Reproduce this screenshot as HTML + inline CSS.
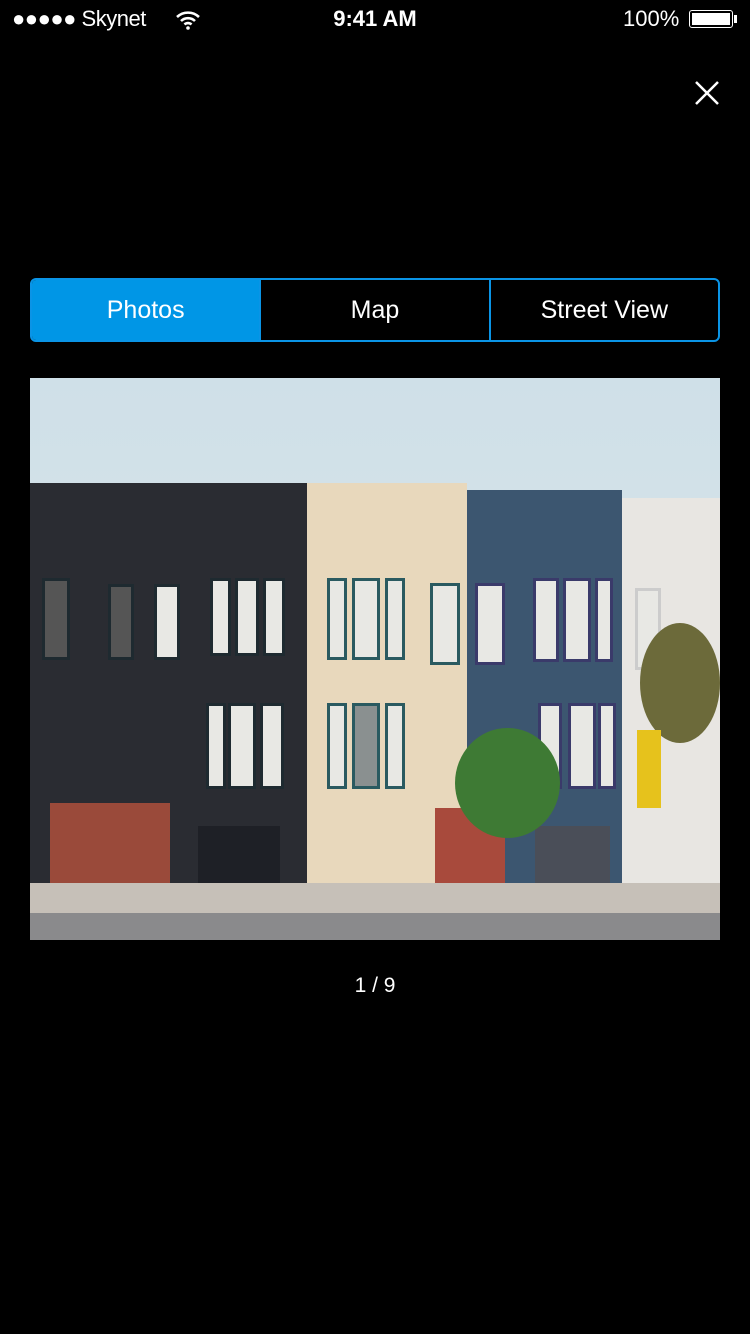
<!DOCTYPE html>
<html><head><style>
body{margin:0;width:750px;height:1334px;background:#000;overflow:hidden;font-family:"Liberation Sans",sans-serif;color:#fff;position:relative}
.a{position:absolute}
.w{position:absolute;background:#e8e8e4;border:3px solid #1e2a30}
</style></head><body>
<div class="a" style="left:12px;top:6px;font-size:22px;letter-spacing:-0.5px">●●●●● Skynet</div>
<svg class="a" style="left:175px;top:10px" width="26" height="20" viewBox="0 0 26 20"><path d="M2 7a16 16 0 0 1 22 0M6 11a10 10 0 0 1 14 0M9.5 14.5a5 5 0 0 1 7 0" stroke="#fff" stroke-width="2.6" fill="none"/><circle cx="13" cy="18" r="1.8" fill="#fff"/></svg>
<div class="a" style="left:0;width:750px;top:6px;text-align:center;font-size:22px;font-weight:bold">9:41 AM</div>
<div class="a" style="left:623px;top:6px;font-size:22px">100%</div>
<div class="a" style="left:689px;top:10px;width:44px;height:18px;border:1.5px solid #fff;border-radius:3px;box-sizing:border-box;padding:2px"><div style="background:#fff;width:100%;height:100%"></div></div>
<div class="a" style="left:734px;top:15px;width:3px;height:8px;background:#fff"></div>
<svg class="a" style="left:694px;top:80px" width="26" height="26"><path d="M2 2L24 24M24 2L2 24" stroke="#fff" stroke-width="2.5"/></svg>
<div class="a" style="left:30px;top:278px;width:690px;height:64px;border:2px solid #0a94e6;border-radius:6px;box-sizing:border-box;display:flex;overflow:hidden;font-size:25px">
<div style="flex:1;background:#0096e6;display:flex;align-items:center;justify-content:center">Photos</div>
<div style="flex:1;display:flex;align-items:center;justify-content:center;border-left:2px solid #0a94e6">Map</div>
<div style="flex:1;display:flex;align-items:center;justify-content:center;border-left:2px solid #0a94e6">Street View</div>
</div>
<div class="a" style="left:30px;top:378px;width:690px;height:562px;overflow:hidden;background:linear-gradient(#cfe0e8,#dde6ea)">
<div class="a" style="left:0;top:105px;width:277px;height:405px;background:#2a2c32"></div>
<div class="a" style="left:277px;top:105px;width:160px;height:405px;background:#e8d8bc"></div>
<div class="a" style="left:437px;top:112px;width:155px;height:398px;background:#3c5670"></div>
<div class="a" style="left:592px;top:120px;width:98px;height:390px;background:#e8e6e2"></div>
<div class="w" style="left:180px;top:200px;width:15px;height:72px"></div>
<div class="w" style="left:205px;top:200px;width:18px;height:72px"></div>
<div class="w" style="left:233px;top:200px;width:16px;height:72px"></div>
<div class="w" style="left:124px;top:206px;width:20px;height:70px"></div>
<div class="w" style="left:78px;top:206px;width:20px;height:70px;background:#555"></div>
<div class="w" style="left:12px;top:200px;width:22px;height:76px;background:#555"></div>
<div class="w" style="left:176px;top:325px;width:14px;height:80px"></div>
<div class="w" style="left:198px;top:325px;width:22px;height:80px"></div>
<div class="w" style="left:230px;top:325px;width:18px;height:80px"></div>
<div class="w" style="left:297px;top:200px;width:14px;height:76px;border-color:#2a5a60"></div>
<div class="w" style="left:322px;top:200px;width:22px;height:76px;border-color:#2a5a60"></div>
<div class="w" style="left:355px;top:200px;width:14px;height:76px;border-color:#2a5a60"></div>
<div class="w" style="left:400px;top:205px;width:24px;height:76px;border-color:#2a5a60"></div>
<div class="w" style="left:297px;top:325px;width:14px;height:80px;border-color:#2a5a60"></div>
<div class="w" style="left:322px;top:325px;width:22px;height:80px;border-color:#2a5a60;background:#8a9090"></div>
<div class="w" style="left:355px;top:325px;width:14px;height:80px;border-color:#2a5a60"></div>
<div class="w" style="left:445px;top:205px;width:24px;height:76px;border-color:#3a3a6a"></div>
<div class="w" style="left:503px;top:200px;width:20px;height:78px;border-color:#3a3a6a"></div>
<div class="w" style="left:533px;top:200px;width:22px;height:78px;border-color:#3a3a6a"></div>
<div class="w" style="left:565px;top:200px;width:12px;height:78px;border-color:#3a3a6a"></div>
<div class="w" style="left:508px;top:325px;width:18px;height:80px;border-color:#3a3a6a"></div>
<div class="w" style="left:538px;top:325px;width:22px;height:80px;border-color:#3a3a6a"></div>
<div class="w" style="left:568px;top:325px;width:12px;height:80px;border-color:#3a3a6a"></div>
<div class="w" style="left:605px;top:210px;width:20px;height:76px;border-color:#ccc"></div>
<div class="a" style="left:20px;top:425px;width:120px;height:80px;background:#9a4a3a"></div>
<div class="a" style="left:405px;top:430px;width:70px;height:80px;background:#a84a3c"></div>
<div class="a" style="left:505px;top:448px;width:75px;height:60px;background:#4a4e58"></div>
<div class="a" style="left:168px;top:448px;width:82px;height:60px;background:#1e2026"></div>
<div class="a" style="left:425px;top:350px;width:105px;height:110px;border-radius:50%;background:#3e7a34"></div>
<div class="a" style="left:610px;top:245px;width:80px;height:120px;border-radius:50%;background:#6c6a3a"></div>
<div class="a" style="left:607px;top:352px;width:24px;height:78px;background:#e6c21c"></div>
<div class="a" style="left:0;top:505px;width:690px;height:30px;background:#c6c0b8"></div>
<div class="a" style="left:0;top:535px;width:690px;height:27px;background:#8a8a8c"></div>
</div>
<div class="a" style="left:0;width:750px;top:974px;text-align:center;font-size:21px">1 / 9</div>
</body></html>
